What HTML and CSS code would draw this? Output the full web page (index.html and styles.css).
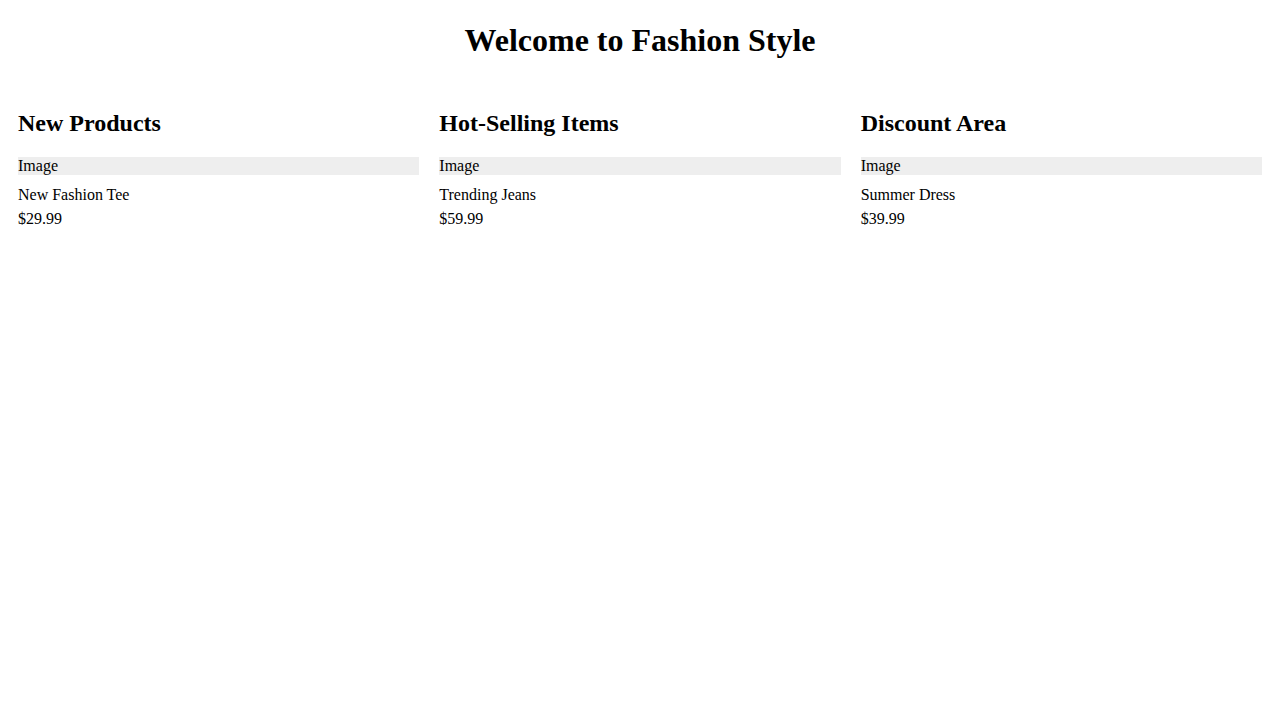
FILE: index.html
```html
<!DOCTYPE html>
<html lang="en">
<head>
<meta charset="utf-8">
<title>Fashion Style</title>
<link rel="stylesheet" href="styles.css">
</head>
<body>
<h1 class="title">Welcome to Fashion Style</h1>
<div class="sections">
  <section class="section">
    <h2 class="section-title">New Products</h2>
    <div class="product">
      <div class="image">Image</div>
      <div class="name">New Fashion Tee</div>
      <div class="price">$29.99</div>
    </div>
  </section>
  <section class="section">
    <h2 class="section-title">Hot-Selling Items</h2>
    <div class="product">
      <div class="image">Image</div>
      <div class="name">Trending Jeans</div>
      <div class="price">$59.99</div>
    </div>
  </section>
  <section class="section">
    <h2 class="section-title">Discount Area</h2>
    <div class="product">
      <div class="image">Image</div>
      <div class="name">Summer Dress</div>
      <div class="price">$39.99</div>
    </div>
  </section>
</div>
</body>
</html>
```
FILE: styles.css
```css
body {
  margin: 8px;
  font-family: "Liberation Serif", "Times New Roman", serif;
  color: #000;
  background: #fff;
}
.title {
  text-align: center;
  font-size: 32px;
  margin: 14px 0 21.44px;
}
.sections {
  display: flex;
  gap: 20px;
  padding: 10px;
}
.section {
  flex: 1 1 0;
  min-width: 0;
}
.section-title {
  font-size: 24px;
  margin: 19.92px 0;
}
.image {
  background: #eee;
  margin-bottom: 11px;
}
.name {
  margin-bottom: 6px;
}
```
